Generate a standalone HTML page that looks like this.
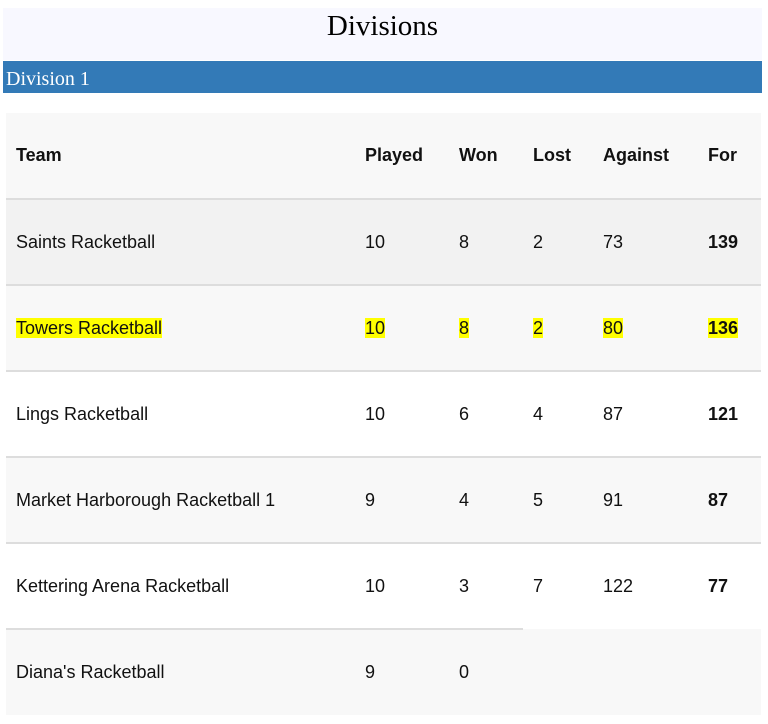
<!DOCTYPE html>
<html><head><meta charset="utf-8"><style>
body{margin:0;background:#fff;font-family:"Liberation Sans",Arial,sans-serif;width:768px;height:724px;overflow:hidden}
.h{position:absolute;left:3px;top:8px;width:759px;height:52px;background:#f8f8ff;text-align:center;font-family:"Liberation Serif",serif;font-size:29px;line-height:36px}
.b{position:absolute;left:3px;top:61px;width:759px;height:32px;background:#337ab7;color:#fff;font-family:"Liberation Serif",serif;font-size:20px;line-height:36px;padding-left:3px;box-sizing:border-box}
table{position:absolute;left:6px;top:113px;width:755px;border-collapse:collapse;font-size:18px;color:#111}
th,td{text-align:left;padding:0 0 0 10px;vertical-align:middle}
th{height:85px;font-weight:bold;background:#f8f8f8}
td{height:84px;border-top:2px solid #ddd}
tr.a td{background:#f2f2f2}tr.s td{background:#f8f8f8}
.y{background:#ff0}
.f{font-weight:bold}
</style></head><body>
<div class="h">Divisions</div>
<div class="b">Division 1</div>
<table>
<colgroup><col style="width:349px"><col style="width:94px"><col style="width:74px"><col style="width:70px"><col style="width:105px"><col></colgroup>
<tr><th>Team</th><th>Played</th><th>Won</th><th>Lost</th><th>Against</th><th>For</th></tr>
<tr class="a"><td>Saints Racketball</td><td>10</td><td>8</td><td>2</td><td>73</td><td class="f">139</td></tr>
<tr class="s"><td><span class="y">Towers Racketball</span></td><td><span class="y">10</span></td><td><span class="y">8</span></td><td><span class="y">2</span></td><td><span class="y">80</span></td><td class="f"><span class="y">136</span></td></tr>
<tr><td>Lings Racketball</td><td>10</td><td>6</td><td>4</td><td>87</td><td class="f">121</td></tr>
<tr class="s"><td>Market Harborough Racketball 1</td><td>9</td><td>4</td><td>5</td><td>91</td><td class="f">87</td></tr>
<tr><td>Kettering Arena Racketball</td><td>10</td><td>3</td><td>7</td><td>122</td><td class="f">77</td></tr>
<tr class="s"><td style="height:85px">Diana's Racketball</td><td>9</td><td>0</td><td style="border-top:none"></td><td style="border-top:none"></td><td style="border-top:none"></td></tr>
</table>
</body></html>
